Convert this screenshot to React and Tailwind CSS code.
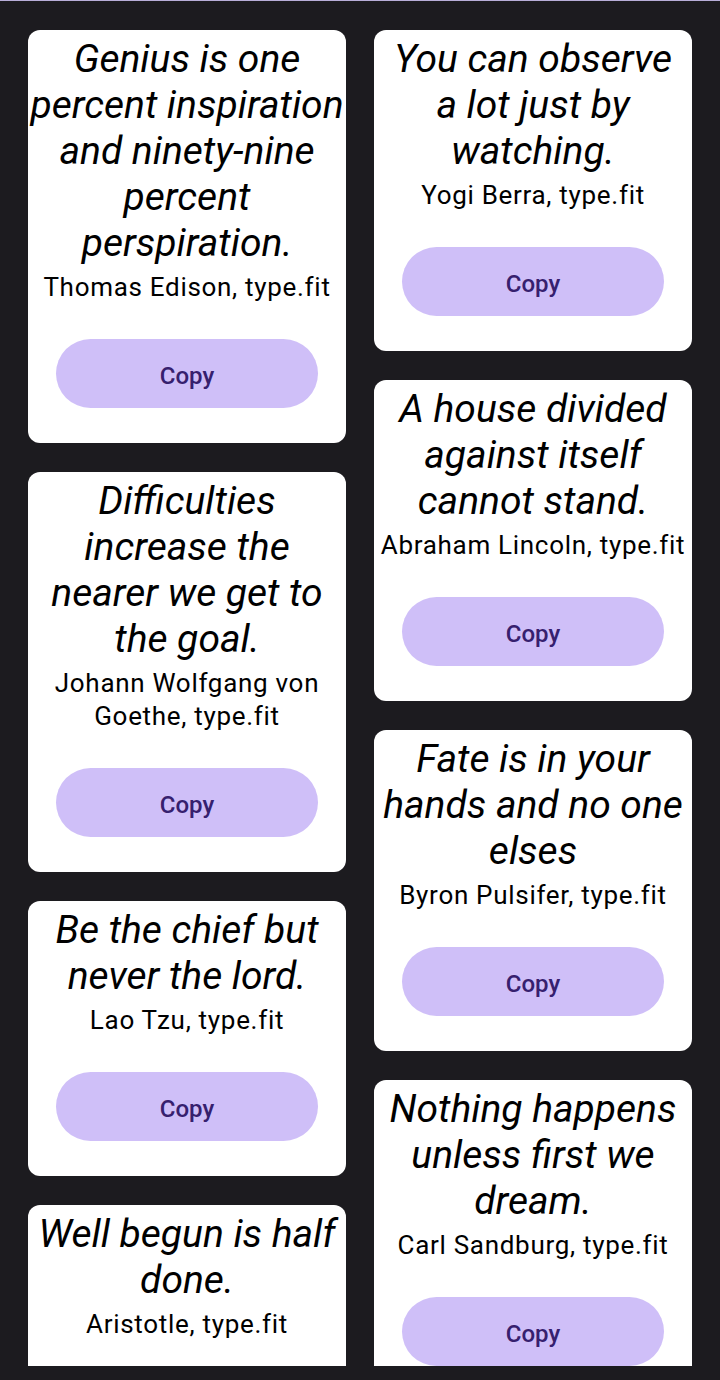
import React from "react";

const leftQuotes = [
  {
    text: "Genius is one percent inspiration and ninety-nine percent perspiration.",
    author: "Thomas Edison, type.fit",
  },
  {
    text: "Difficulties increase the nearer we get to the goal.",
    author: "Johann Wolfgang von Goethe, type.fit",
  },
  { text: "Be the chief but never the lord.", author: "Lao Tzu, type.fit" },
  { text: "Well begun is half done.", author: "Aristotle, type.fit" },
];

const rightQuotes = [
  { text: "You can observe a\u00a0lot just by watching.", author: "Yogi Berra, type.fit" },
  { text: "A house divided against itself cannot stand.", author: "Abraham Lincoln, type.fit" },
  { text: "Fate is in your hands and no one elses", author: "Byron Pulsifer, type.fit" },
  { text: "Nothing happens unless first we dream.", author: "Carl Sandburg, type.fit" },
];

const QuoteCard = ({ text, author }) => (
  <div className="w-full bg-white rounded-[12px] pt-[6px] pb-[35px] flex flex-col items-center text-center shrink-0">
    <p className="italic text-[39px] leading-[46px] text-black">{text}</p>
    <p className="mt-[5px] text-[26px] leading-[33px] tracking-[0.7px] text-black">{author}</p>
    <button className="mt-[35px] w-[262px] h-[69px] pt-[4px] rounded-full bg-[#cfbff8] text-[#36206e] text-[24px] font-medium">
      Copy
    </button>
  </div>
);

export default function App() {
  return (
    <div className="w-[720px] h-[1380px] bg-[#1c1b1f] font-['Roboto',sans-serif] overflow-hidden">
      <div className="h-px bg-[#b8aed8]"></div>
      <div className="h-[1365px] overflow-hidden flex gap-[28px] px-[28px] pt-[29px]">
        <div className="flex-1 flex flex-col gap-[29px]">
          {leftQuotes.map((q) => (
            <QuoteCard key={q.author} {...q} />
          ))}
        </div>
        <div className="flex-1 flex flex-col gap-[29px]">
          {rightQuotes.map((q) => (
            <QuoteCard key={q.author} {...q} />
          ))}
        </div>
      </div>
    </div>
  );
}
